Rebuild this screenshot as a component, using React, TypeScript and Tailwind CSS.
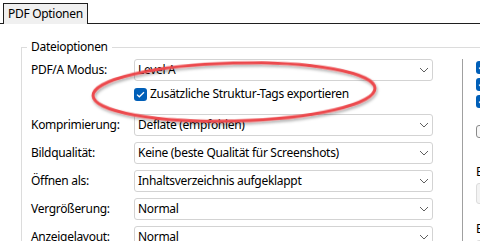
import React from "react";

function Chevron() {
  return (
    <svg width="10" height="6" viewBox="0 0 10 6" className="shrink-0">
      <path d="M1 1 L5 5 L9 1" fill="none" stroke="#606060" strokeWidth="1" />
    </svg>
  );
}

function Combo({ value }: { value: string }) {
  return (
    <div className="flex h-[22px] w-[299px] items-center justify-between rounded-[3px] border border-[#d3d3d3] bg-white pl-[3px] pr-[3px]">
      <span className="whitespace-nowrap">{value}</span>
      <Chevron />
    </div>
  );
}

function Check({ checked }: { checked: boolean }) {
  return checked ? (
    <div className="flex h-[13px] w-[13px] shrink-0 items-center justify-center rounded-[3px] bg-[#005fb8]">
      <svg width="9" height="7" viewBox="0 0 9 7">
        <path d="M1 3.6 L3.3 5.8 L8 1.2" fill="none" stroke="#ffffff" strokeWidth="1.2" />
      </svg>
    </div>
  ) : (
    <div className="h-[13px] w-[13px] shrink-0 rounded-[3px] border border-[#8a8a8a] bg-[#f7f7f7]" />
  );
}

const rows = [
  { label: "Komprimierung:", value: "Deflate (empfohlen)" },
  { label: "Bildqualität:", value: "Keine (beste Qualität für Screenshots)" },
  { label: "Öffnen als:", value: "Inhaltsverzeichnis aufgeklappt" },
  { label: "Vergrößerung:", value: "Normal" },
  { label: "Anzeigelayout:", value: "Normal" },
];

export default function App() {
  return (
    <div className="relative h-[241px] w-[480px] overflow-hidden bg-white font-['Noto_Sans',sans-serif] text-[12px] leading-[16px] tracking-[-0.3px] text-black">
      {/* tab strip */}
      <div className="flex h-[24px] items-stretch pt-[3px]">
        <div className="w-[3px] border-b border-[#1f1f1f]" />
        <div className="flex w-[85px] items-center border-l border-r border-t border-[#1f1f1f] bg-[#f0f0f0] pl-[4px]">
          <span className="whitespace-nowrap">PDF Optionen</span>
        </div>
        <div className="flex-1 border-b border-[#1f1f1f]" />
      </div>

      {/* group box */}
      <fieldset className="ml-[21px] mt-[15px] w-[540px] border border-[#dcdcdc]">
        <legend className="ml-[5px] px-[4px] leading-[16px]">Dateioptionen</legend>
        <div className="mt-[4px] flex items-stretch">
          <div className="flex flex-col pl-[9px]">
            <div className="flex items-center">
              <span className="w-[103px] whitespace-nowrap">PDF/A Modus:</span>
              <Combo value="Level A" />
            </div>
            <div className="mt-[2px] flex h-[22px] items-center pl-[103px]">
              <Check checked />
              <span className="ml-[3px] whitespace-nowrap">Zusätzliche Struktur-Tags exportieren</span>
            </div>
            {rows.map((r, i) => (
              <div key={r.label} className={`flex items-center ${i === 0 ? "mt-[9px]" : "mt-[6px]"}`}>
                <span className="w-[103px] whitespace-nowrap">{r.label}</span>
                <Combo value={r.value} />
              </div>
            ))}
          </div>
          <div className="ml-[29px] w-px bg-[#a0a0a0]" />
          <div className="ml-[13px] flex flex-col">
            {["Lesezeichen exportieren", "Kommentare exportieren", "Hyperlinks exportieren"].map((t) => (
              <div key={t} className="flex h-[17px] items-center">
                <Check checked />
                <span className="ml-[4px] whitespace-nowrap">{t}</span>
              </div>
            ))}
            <div className="mt-[13px] flex h-[17px] items-center">
              <Check checked={false} />
              <span className="ml-[4px] whitespace-nowrap">Formulare exportieren</span>
            </div>
            <div className="mt-[24px] whitespace-nowrap">Benutzerkennwort:</div>
            <div className="mt-[3px] h-[21px] w-[120px] rounded-[3px] border border-[#dcdcdc] bg-[#f3f3f3]" />
            <div className="mt-[17px] whitespace-nowrap">Besitzerkennwort:</div>
            <div className="mt-[3px] h-[21px] w-[120px] rounded-[3px] border border-[#dcdcdc] bg-[#f3f3f3]" />
          </div>
        </div>
      </fieldset>

      {/* red annotation ellipse */}
      <svg className="pointer-events-none absolute left-0 top-0" width="480" height="241">
        <defs>
          <filter id="sh" x="-20%" y="-50%" width="140%" height="200%">
            <feDropShadow dx="1" dy="2" stdDeviation="1.5" floodColor="#000000" floodOpacity="0.35" />
          </filter>
        </defs>
        <ellipse
          cx="234"
          cy="92"
          rx="141"
          ry="29"
          transform="rotate(-1.5 234 92)"
          fill="none"
          stroke="#ec4a4d"
          strokeWidth="3"
          filter="url(#sh)"
        />
      </svg>
    </div>
  );
}
